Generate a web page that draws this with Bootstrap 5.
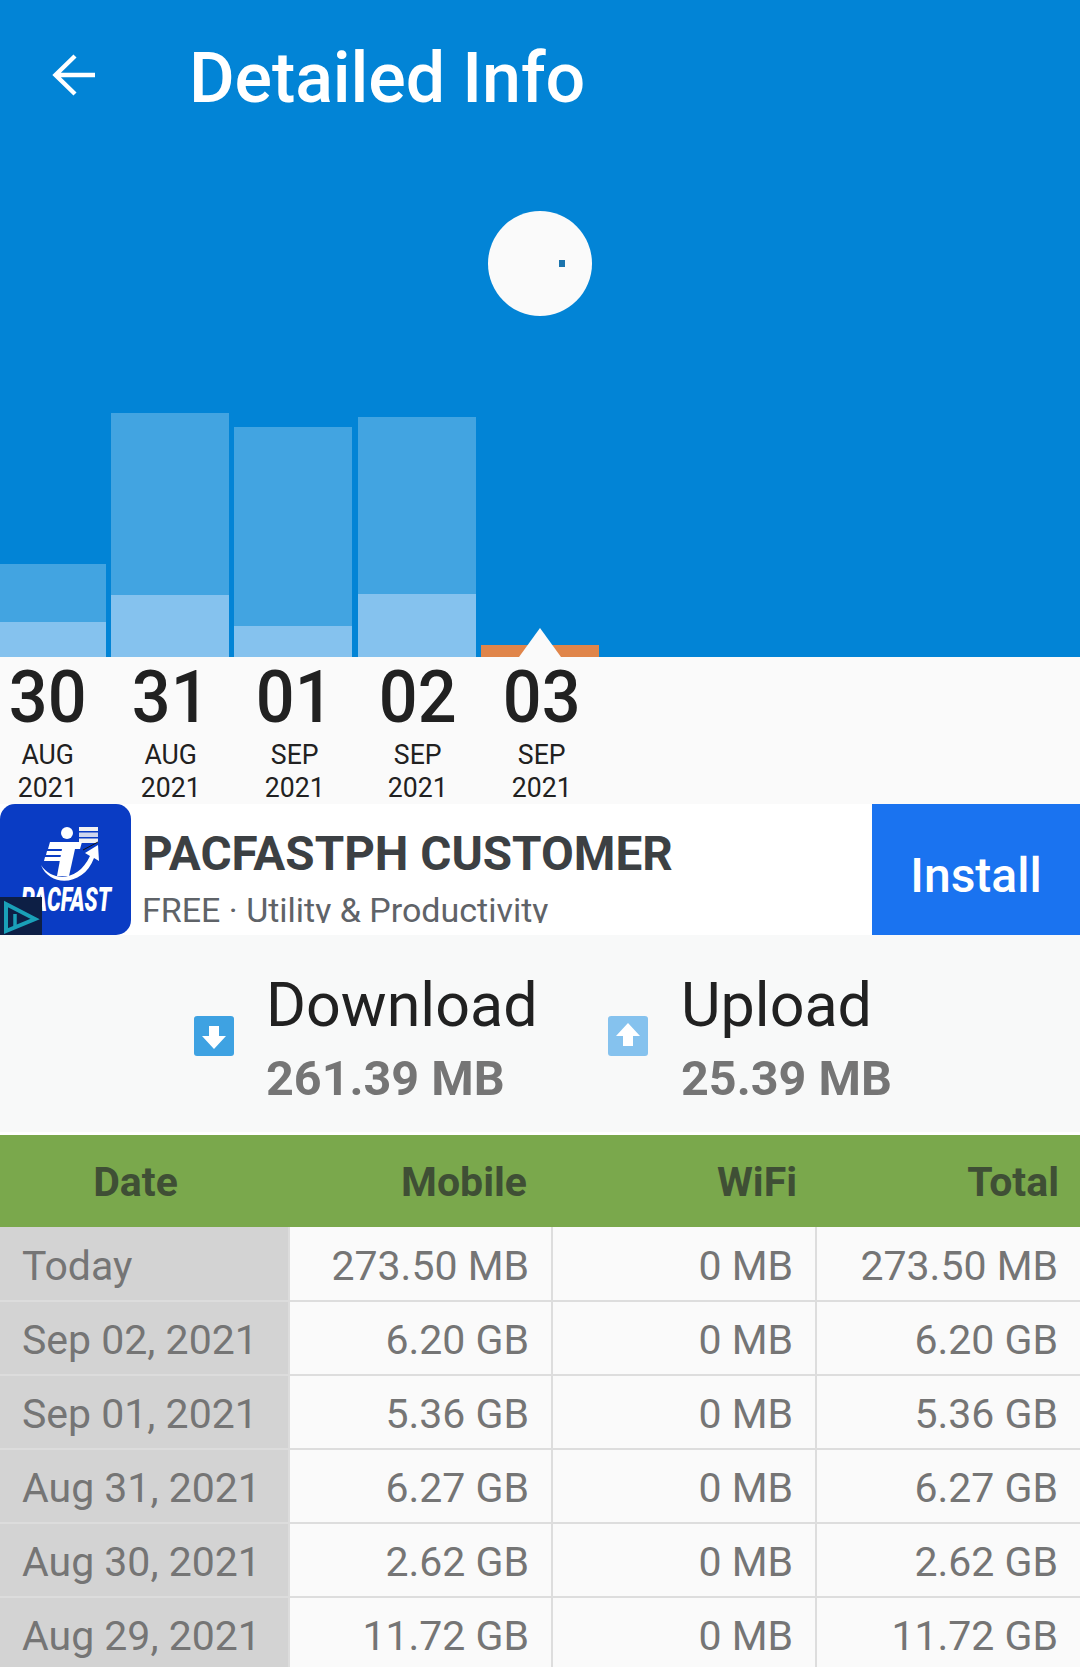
<!DOCTYPE html>
<html lang="en"><head><meta charset="utf-8"><title>Detailed Info</title>
<link href="https://cdn.jsdelivr.net/npm/bootstrap@5.3.0/dist/css/bootstrap.min.css" rel="stylesheet">
<style>
html,body{height:1667px;overflow:hidden;background:#fafafa;font-family:Roboto,"Liberation Sans",sans-serif}
.hero{height:657px;background:#0284d6;position:relative}
.topbar{height:152px;padding-left:51px;color:#fff}
.back-ic{width:48px;height:48px;margin-top:-2px}
.hero-title{font-size:70px;font-weight:500;margin-left:90px;line-height:1;margin-bottom:0;padding-top:4px;letter-spacing:-.1px}
.dial{width:104px;height:105px;border-radius:50%;background:#fafafa;margin:59px 0 97px 488px;position:relative}
.dial i{position:absolute;left:71px;top:49px;width:6px;height:7px;background:#1b74ad}
.bars{height:244px;gap:5px}
.dbar{width:118px;background:#42a4e1}
.dbar.first{width:106px}
.dbar.shift{margin-left:1px}
.dbar.empty{background:transparent}
.dbar b{display:block;background:#85c2ee}
.dbar b.today{background:#e0854a}
.pointer{position:absolute;left:519px;bottom:0;width:0;height:0;border-left:21px solid transparent;border-right:21px solid transparent;border-bottom:29px solid #fafafa}
.dates{height:147px;margin-left:-14px;color:#212121}
.dcell{width:123.4px;text-align:center}
.dnum{font-size:72px;font-weight:500;line-height:1;margin-top:5px;height:74px;transform:scale(.95,1)}
.dtxt{font-size:28px;line-height:33px;transform:scale(.95,1)}
.dtxt.m{margin-top:2px}
.adbox{height:131px;background:#fff;overflow:hidden}
.adlogo{width:131px;height:131px;flex:none;display:block}
.adtext{flex:1;padding-left:11px;min-width:0;height:131px;overflow:hidden}
.adname{font-size:47.6px;font-weight:700;color:#3c4043;line-height:1;margin-top:27px;white-space:nowrap}
.adsub{font-size:34px;color:#5f6368;line-height:40px;margin-top:11px;height:33px;overflow:hidden;white-space:nowrap}
.install{width:208px;flex:none;border-radius:0;background:#1a73f0;border:0;color:#fff;font-size:48px;font-weight:500;padding:12px 0 0}
.install:hover{background:#1a73f0;color:#fff}
.stats{height:200px;border-bottom:3px solid #fff;background:#f8f9f9}
.stat-a{width:415px;padding-left:194px;box-sizing:content-box}
.sic{width:40px;height:40px;flex:none;margin-top:81px;display:block}
.stxt{margin-left:32px;padding-top:40px}
.stxt.up{margin-left:33px}
.sname{font-size:61px;color:#212121;line-height:1;white-space:nowrap}
.sval{font-size:48.5px;font-weight:700;color:#757575;line-height:1;margin-top:19px;white-space:nowrap}
.dtable{table-layout:fixed;width:1080px;margin:0;font-size:41px;color:#757575;--bs-table-bg:#fafafa;border-color:#ddd}
.dtable th{background:#7aa84c;color:#3f4f35;font-size:41px;font-weight:700;height:92px;padding:4px 21px 0 0;vertical-align:middle;text-align:right;border:0;box-shadow:none}
.dtable th:first-child{text-align:center;padding-right:18px}
.dtable th:nth-child(2){padding-right:25px}
.dtable th:nth-child(3){padding-right:19px}
.dtable td{height:74px;padding:5px 22px 0 0;vertical-align:middle;text-align:right;border:2px solid #ddd;border-width:0 2px 2px 0;color:#757575;background:#fafafa;box-shadow:none;line-height:1}
.dtable td:first-child{background:#d3d3d3;text-align:left;padding:5px 0 0 22px;border-color:#dcdcdc}
.dtable td:last-child{border-right:0}
</style></head><body>
<div class="hero">
  <div class="topbar d-flex align-items-center">
    <svg class="back-ic" viewBox="0 0 48 48" fill="none" stroke="#fff" stroke-width="4.4"><path d="M44 24H4M24 5 4.5 24 24 43"/></svg>
    <h1 class="hero-title">Detailed Info</h1>
  </div>
  <div class="dial"><i></i></div>
  <div class="bars d-flex align-items-end">
    <div class="dbar first" style="height:93px"><b style="height:35px;margin-top:58px"></b></div>
    <div class="dbar" style="height:244px"><b style="height:62px;margin-top:182px"></b></div>
    <div class="dbar" style="height:230px"><b style="height:31px;margin-top:199px"></b></div>
    <div class="dbar shift" style="height:240px"><b style="height:63px;margin-top:177px"></b></div>
    <div class="dbar empty" style="height:12px"><b class="today" style="height:12px"></b></div>
  </div>
  <div class="pointer"></div>
</div>
<div class="dates d-flex">
  <div class="dcell"><div class="dnum">30</div><div class="dtxt m">AUG</div><div class="dtxt">2021</div></div>
  <div class="dcell"><div class="dnum">31</div><div class="dtxt m">AUG</div><div class="dtxt">2021</div></div>
  <div class="dcell"><div class="dnum">01</div><div class="dtxt m">SEP</div><div class="dtxt">2021</div></div>
  <div class="dcell"><div class="dnum">02</div><div class="dtxt m">SEP</div><div class="dtxt">2021</div></div>
  <div class="dcell"><div class="dnum">03</div><div class="dtxt m">SEP</div><div class="dtxt">2021</div></div>
</div>
<div class="adbox d-flex">
  <svg class="adlogo" viewBox="0 0 131 131">
    <rect width="131" height="131" rx="15" fill="#0a3cc4"/>
    <circle cx="67" cy="29" r="6" fill="#fff"/>
    <rect x="79" y="23" width="19" height="4" fill="#f2f2f2"/><rect x="79" y="28.5" width="19" height="4.5" fill="#cfd6ee"/><rect x="79" y="34.5" width="19" height="4.5" fill="#f2f2f2"/>
    <path d="M50 38H82L80 45H48Z" fill="#fff"/>
    <path d="M47 47H69L68 51H46ZM45 53H67L66 57H44Z" fill="#fff"/>
    <path d="M62 45H75L69 72H57Z" fill="#fff"/>
    <path d="M41 61C52 78 78 78 90 52L85 49 98 41 99 57 94 54C84 82 50 84 41 61Z" fill="#fff"/>
    <path d="M83 46 98 38" stroke="#111" stroke-width="1"/>
    <text x="21" y="107" font-family="Roboto,'Liberation Sans',sans-serif" font-size="33" font-weight="900" font-style="italic" fill="#fff" textLength="90" lengthAdjust="spacingAndGlyphs">PACFAST</text>
    <rect x="0" y="93" width="42" height="38" fill="#0d1f45"/>
    <path d="M6 100 35 115 6 127Z" fill="none" stroke="#1aa0b8" stroke-width="4"/>
    <path d="M15 110V122" stroke="#1aa0b8" stroke-width="3.5"/>
  </svg>
  <div class="adtext">
    <div class="adname">PACFASTPH CUSTOMER</div>
    <div class="adsub">FREE · Utility &amp; Productivity</div>
  </div>
  <button class="btn install" type="button">Install</button>
</div>
<div class="stats d-flex">
  <div class="stat-a d-flex" style="width:221px">
    <svg class="sic" viewBox="0 0 40 40"><rect width="40" height="40" rx="3" fill="#3ea2e2"/><path d="M15 10H25V20H32L20 33 8 20H15Z" fill="#fff"/></svg>
    <div class="stxt"><div class="sname">Download</div><div class="sval">261.39 MB</div></div>
  </div>
  <div class="d-flex" style="margin-left:193px">
    <svg class="sic" viewBox="0 0 40 40"><rect width="40" height="40" rx="3" fill="#85c2ee"/><path d="M15 30H25V20H32L20 7 8 20H15Z" fill="#fff"/></svg>
    <div class="stxt up"><div class="sname">Upload</div><div class="sval">25.39 MB</div></div>
  </div>
</div>
<table class="table dtable">
  <colgroup><col style="width:289px"><col style="width:263px"><col style="width:264px"><col style="width:264px"></colgroup>
  <thead><tr><th>Date</th><th>Mobile</th><th>WiFi</th><th>Total</th></tr></thead>
  <tbody>
    <tr><td>Today</td><td>273.50 MB</td><td>0 MB</td><td>273.50 MB</td></tr>
    <tr><td>Sep 02, 2021</td><td>6.20 GB</td><td>0 MB</td><td>6.20 GB</td></tr>
    <tr><td>Sep 01, 2021</td><td>5.36 GB</td><td>0 MB</td><td>5.36 GB</td></tr>
    <tr><td>Aug 31, 2021</td><td>6.27 GB</td><td>0 MB</td><td>6.27 GB</td></tr>
    <tr><td>Aug 30, 2021</td><td>2.62 GB</td><td>0 MB</td><td>2.62 GB</td></tr>
    <tr><td>Aug 29, 2021</td><td>11.72 GB</td><td>0 MB</td><td>11.72 GB</td></tr>
  </tbody>
</table>
<script src="https://cdn.jsdelivr.net/npm/bootstrap@5.3.0/dist/js/bootstrap.bundle.min.js"></script>
</body></html>
